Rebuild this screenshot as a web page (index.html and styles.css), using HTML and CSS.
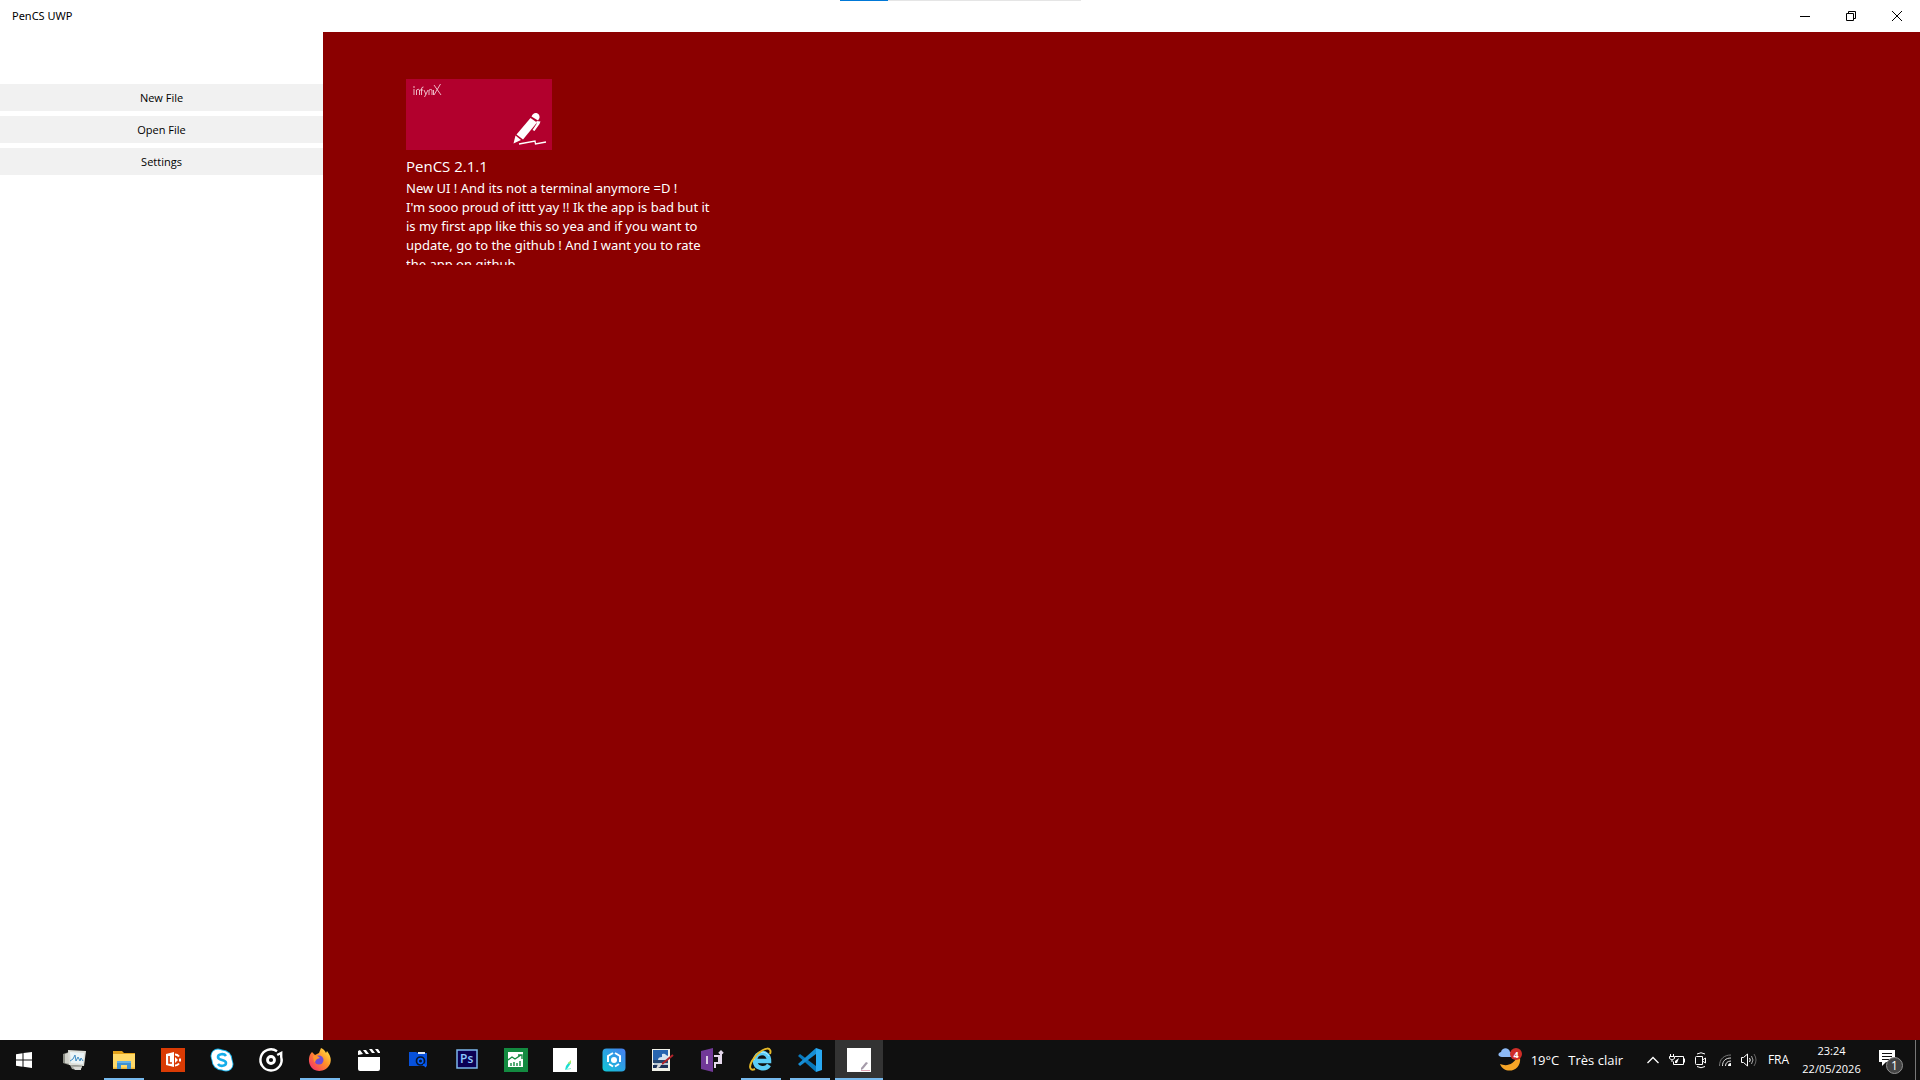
FILE: index.html
```html
<!DOCTYPE html>
<html lang="en">
<head>
<meta charset="utf-8">
<title>PenCS UWP</title>
<link rel="stylesheet" href="styles.css">
</head>
<body>
<div class="load-track"><div class="load-value"></div></div>
<header class="titlebar">
  <h1 class="app-name">PenCS UWP</h1>
  <div class="window-controls">
    <button class="caption" aria-label="Minimize"><svg width="10" height="10" viewBox="0 0 10 10"><path d="M0 5.500h10" stroke="#000" fill="none"/></svg></button>
    <button class="caption" aria-label="Restore"><svg width="10" height="10" viewBox="0 0 10 10"><path d="M.5 2.500h7v7h-7zM2.500 2.500v-2h7v7h-2" stroke="#000" fill="none"/></svg></button>
    <button class="caption" aria-label="Close"><svg width="10" height="10" viewBox="0 0 10 10"><path d="M0 0l10 10M10 0L0 10" stroke="#000" fill="none"/></svg></button>
  </div>
</header>
<div class="workspace">
  <nav class="sidebar">
    <button class="side-button">New File</button>
    <button class="side-button">Open File</button>
    <button class="side-button">Settings</button>
  </nav>
  <main class="content">
    <article class="news">
      <svg class="banner" width="146" height="71" viewBox="0 0 146 71" role="img" aria-label="infyniX">
        <rect width="146" height="71" fill="#b2002d"/>
        <g fill="none" stroke="#f3cbd5" stroke-width=".9">
          <path d="M8 10v6M7 8h2M10.500 16v-5q2-1.500 3 0v5M15.500 16V10q0-2 2-2M14 11h3M18 11l2 4.500M22 11l-3.500 7M23 16v-5q2-1 3 0v5M27.500 11v5M28 6l7 10M34.500 5L28 16"/>
        </g>
        <g fill="#fff">
          <path d="M125.500 37.500q1.500-4 5-3.500 3.500 1 3 5l-1.500 2.500z"/>
          <path d="M124.500 39l6.500 4.500-14 17-6.500-5z"/>
          <path d="M109.500 56.500l5.500 4.500-7.500 3.500z"/>
          <path d="M130.500 42l4 .5-1 2.500-5 7-2-1 4-6z"/>
        </g>
        <path d="M113 65l16-3 .5 3 10.500-2" fill="none" stroke="#fff" stroke-width="1.300"/>
      </svg>
      <h2 class="news-title">PenCS 2.1.1</h2>
      <p class="news-text">New UI ! And its not a terminal anymore =D !<br>I'm sooo proud of ittt yay !! Ik the app is bad but it<br>is my first app like this so yea and if you want to<br>update, go to the github ! And I want you to rate<br>the app on github</p>
    </article>
  </main>
</div>
<footer class="taskbar">
  <button class="task start" aria-label="Start"><svg width="24" height="24" viewBox="0 0 24 24"><path fill="#fff" d="M4 6.300l6.500-1v6.200H4zM11.500 5.100L20 4v7.500h-8.500zM4 12.500h6.500v6.200L4 17.800zM11.500 12.500H20V20l-8.500-1.200z"/></svg></button>
  <div class="apps">
  <button class="task" aria-label="Performance Monitor"><svg width="24" height="24" viewBox="0 0 24 24"><path fill="#8b8d84" d="M0 6l6-2v13l-6-2z"/><path fill="#cfd0c9" d="M2 6l5-2v12l-5-1z"/><path fill="#a9aba4" d="M7 17l12 1v2l-4 2-6-1z"/><path fill="#d9dad6" d="M10 19l8 0 0 3-6 0z"/><path fill="#dcded8" d="M5 2l18 1-2 15-15-1z"/><path fill="#eaf4f7" d="M7 4l14 1-1 11-12-1z"/><path fill="none" stroke="#3f8cc3" d="M7 13l3-2 2-4 1 6 2-4 2 4 1-3 2 3"/></svg></button>
  <button class="task running" aria-label="File Explorer"><svg width="24" height="24" viewBox="0 0 24 24"><path fill="#e3a21a" d="M1 3h9l2 2h11v16H1z"/><path fill="#ffd968" d="M1 6h22v14H1z"/><path fill="#f8c94f" d="M1 19h22v1.500H1z"/><path fill="#3f91d1" d="M5 13h14v8h-4v-4h-6v4H5z"/><path fill="#66b2e7" d="M5 13h14v2H5z"/></svg></button>
  <button class="task" aria-label="Office tools"><svg width="24" height="24" viewBox="0 0 24 24"><path fill="#da3b04" d="M0 0h24v24H0z"/><path fill="#fff" d="M5 6l8-2v15l-8-2z"/><path fill="none" stroke="#d53400" stroke-width="1.600" d="M8 8v7h3"/><path fill="none" stroke="#fff" stroke-width="2" d="M14 6.500q2.500 0 4 2M19 10.500v3M18 15.500q-1.500 2-4 2"/><path fill="#fff" d="M14 9l3 3-3 3z"/></svg></button>
  <button class="task" aria-label="Skype"><svg width="24" height="24" viewBox="0 0 24 24"><g fill="#14aee6"><circle cx="8" cy="8" r="7.500"/><circle cx="16" cy="16" r="7.500"/><circle cx="12" cy="12" r="10.500"/></g><g fill="#fff"><circle cx="8" cy="8" r="6.600"/><circle cx="16" cy="16" r="6.600"/><circle cx="12" cy="12" r="9.600"/></g><path fill="none" stroke="#16aeea" stroke-width="2.600" d="M16 8c-2-3-8-2-8 1 0 4 8 2 8 6 0 3-6 4-8 1"/></svg></button>
  <button class="task" aria-label="Groove Music"><svg width="24" height="24" viewBox="0 0 24 24" fill="none" stroke="#fff"><path stroke-width="2.400" d="M18 3.200A10.600 10.600 0 1 0 22.200 9V5l-4 2"/><circle cx="12" cy="12" r="3.500" stroke-width="2.800"/></svg></button>
  <button class="task running" aria-label="Firefox"><svg width="24" height="24" viewBox="0 0 24 24"><defs><linearGradient id="fox" x1="1" y1="0" x2="0" y2="1"><stop offset="0" stop-color="#fff34b"/><stop offset=".45" stop-color="#ff9128"/><stop offset="1" stop-color="#f52173"/></linearGradient></defs><path fill="url(#fox)" d="M4 4l3 3 4-2 2-5c3 1 4 3 5 5l1-2c3 4 5 8 3 13-4 9-17 9-20 1-2-5-1-10 2-13z"/><circle cx="11" cy="12" r="4.500" fill="#704bd4"/><path fill="#ff942d" d="M5 8c3-1 5 0 7 2l-3 1c-2 2-1 3-3 3z"/></svg></button>
  <button class="task" aria-label="Movies"><svg width="24" height="24" viewBox="0 0 24 24" fill="#fff"><path d="M1 9h22v12q0 2-2 2H3q-2 0-2-2zM1 3l2-1 3 4-5 1zM6 2h3l3 4H9zM12 1h3l3 4h-3zM18 1h3l2 3v1h-2z"/></svg></button>
  <button class="task" aria-label="Folder search"><svg width="24" height="24" viewBox="0 0 24 24"><path fill="#0751db" d="M3 4h7l2 1h9v13H3z"/><path fill="#e0e8f3" d="M12 4h7v2h-7z"/><circle cx="14.500" cy="13" r="4" fill="#0861ff" stroke="#06162d" stroke-width="1.700"/><circle cx="14.500" cy="13" r="1.500" fill="#06162d"/><path d="M17.500 16l2.500 3" stroke="#0861ff" stroke-width="1.500"/></svg></button>
  <button class="task" aria-label="Photoshop"><svg width="24" height="24" viewBox="0 0 24 24"><path fill="#0b0054" stroke="#7cb7eb" stroke-width="1.500" d="M2 2h20v18H2z"/><text class="ps-letters" x="5" y="15">Ps</text></svg></button>
  <button class="task" aria-label="Market charts"><svg width="24" height="24" viewBox="0 0 24 24"><path fill="#138a40" d="M0 0h24v24H0z"/><path fill="#fff" d="M4 4h15v15H4z"/><path fill="none" stroke="#138a40" stroke-width="1.400" d="M4 12l4-3 3 2 6-4M14 7h4v4M7 18v-3M10 18v-4M13 18v-3M16 18v-5"/></svg></button>
  <button class="task" aria-label="Color pen"><svg width="24" height="24" viewBox="0 0 24 24"><path fill="#fff" d="M0 0h24v24H0z"/><path fill="#19ddd2" d="M13 18l3-4 2 1-4 6-2 1z"/><path fill="#a8e965" d="M15 15l3-3v3l-2 1z"/><path stroke="#82efd9" d="M13 21.500l5-1"/></svg></button>
  <button class="task" aria-label="Hex cloud"><svg width="24" height="24" viewBox="0 0 24 24"><defs><linearGradient id="hex" x1="0" y1="1" x2="1" y2="0"><stop stop-color="#10c7d5"/><stop offset="1" stop-color="#477df0"/></linearGradient></defs><rect width="23" height="23" x=".5" y=".5" rx="4" fill="url(#hex)"/><path fill="none" stroke="#fff" stroke-width="2" d="M11 5L6 8v6M13 5l5 3v6M7 16l4 2.500M17 16l-4 2.500"/><circle cx="12" cy="12" r="3" fill="#fff"/></svg></button>
  <button class="task" aria-label="Image editor"><svg width="24" height="24" viewBox="0 0 24 24"><path fill="#f1f1e8" d="M1 1h18v22H1z"/><path fill="#2865b0" d="M2 2h15v10H2z"/><path fill="#d6e4ef" d="M11 6q3-1 4 1l2 1v4H7q0-3 4-3z"/><path fill="#26466f" d="M2 12h15v3H2z"/><path fill="#b7c6d2" d="M3 15h14v2H3z"/><path fill="#1c3157" d="M2 17h15v3H2z"/><path stroke="#b2242a" stroke-width="2" d="M22 7L11 16"/><path fill="#d8d8d8" d="M11 15l-2 4-4 2 2-5z"/></svg></button>
  <button class="task" aria-label="Design tool"><svg width="24" height="24" viewBox="0 0 24 24"><path fill="#713998" d="M1 3l12-3v24L1 21z"/><path fill="none" stroke="#fff" stroke-width="1.500" d="M7 8v8"/><path fill="none" stroke="#e5d8ec" stroke-width="2" d="M14 8h5v7h-4v5M18 15h3V4M19 5.500l2-2 2 2"/></svg></button>
  <button class="task running" aria-label="Internet Explorer"><svg width="24" height="24" viewBox="0 0 24 24"><path fill="none" stroke="#5bcdf7" stroke-width="4.500" d="M20 17c-4 6-14 3-14-4C6 3 20 2 20 13H7"/><path fill="none" stroke="#b5eefe" d="M5 12C6 3 17 2 20 8"/><path fill="none" stroke="#e6b827" stroke-width="2" d="M6 21c-4 2-7-1-3-8C9 3 19-2 21 2q1 1 0 4"/></svg></button>
  <button class="task running" aria-label="Visual Studio Code"><svg width="24" height="24" viewBox="0 0 24 24"><path fill="#0879bd" d="M0 8l2-2 16 12v6z"/><path fill="#168ed5" d="M0 16l2 2L18 6V0z"/><path fill="#29a9f2" d="M18 0l6 2v20l-6 2z"/></svg></button>
  <button class="task running active" aria-label="PenCS UWP"><svg width="24" height="24" viewBox="0 0 24 24"><path fill="#fff" d="M0 0h24v24H0z"/><path fill="#a59baa" d="M14 20l5-6 2 1-5 6-2 1z"/><path stroke="#dfa3b4" d="M14 22.500h9"/></svg></button>
  </div>
  <div class="tray">
    <button class="weather"><svg width="24" height="24" viewBox="0 0 24 24"><path fill="#f6a526" d="M22 9c2 15-16 18-20 7 7 3 14 0 17-7z"/><path fill="#8db9f4" d="M4 9C0 9-1 5 3 4c1-5 8-5 9 0 4 0 4 5 1 5z"/><circle cx="18" cy="6" r="6" fill="#cf2d27"/><text class="badge-number" x="18" y="10">4</text></svg><span>19°C</span><span>Très clair</span></button>
    <button class="tray-icon" aria-label="Show hidden icons"><svg width="12" height="12" viewBox="0 0 12 12"><path d="M.5 9L6 3.500 11.500 9" fill="none" stroke="#fff" stroke-width="1.300"/></svg></button>
    <button class="tray-icon" aria-label="Battery"><svg width="16" height="16" viewBox="0 0 16 16"><path fill="none" stroke="#fff" d="M6 4.500h8.500v8H4.500v-3M15.500 6.500v4M1.500 2v2M4.500 2v2M.5 4.500h5v2q-2.500 3-5 0zM3 8v2"/><path fill="#fff" d="M10 6l-2 5H6V9z"/></svg></button>
    <button class="tray-icon" aria-label="Meet Now"><svg width="12" height="16" viewBox="0 0 12 16"><path fill="none" stroke="#fff" d="M.5 5.500q0-1 1-1h6v8h-6q-1 0-1-1zM7.500 8l3-2v5l-3-2M2 2q4-2.500 8 0M2 14.500q4 2.500 8 0"/></svg></button>
    <button class="tray-icon" aria-label="Network"><svg width="14" height="16" viewBox="0 0 14 16" fill="none"><path stroke="#777" d="M1.500 14C1.500 7 6 3 13 3"/><path stroke="#ddd" d="M4.500 14C4.500 9 7.500 6 13 6M7.500 14c0-3 2-5 5.500-5"/><path fill="#fff" d="M10 14q0-3 3-3v3z"/></svg></button>
    <button class="tray-icon" aria-label="Volume"><svg width="16" height="16" viewBox="0 0 16 16" fill="none"><path stroke="#fff" d="M.5 5.500h2l4-3.500v12l-4-3.500h-2zM8.500 6q1.500 2 0 4"/><path stroke="#aaa" d="M10.500 4q3 4 0 8"/><path stroke="#666" d="M13 2q4 6 0 12"/></svg></button>
    <button class="language">FRA</button>
    <button class="clock"><span>23:24</span><span>22/05/2026</span></button>
    <button class="notifications" aria-label="1 notification"><svg width="26" height="26" viewBox="0 0 26 26"><path fill="#fff" d="M1 1h16v12H8l-4 4v-4H1z"/><path stroke="#111" d="M4 4.500h10M4 7.500h10M4 10.500h7"/><circle cx="16.500" cy="16.500" r="8" fill="#444" stroke="#929292"/><text class="count-number" x="16.500" y="21">1</text></svg></button>
    <button class="show-desktop" aria-label="Show desktop"></button>
  </div>
</footer>
</body>
</html>
```
FILE: styles.css
```css
* { box-sizing: border-box; }

body {
  margin: 0;
  min-height: 100vh;
  display: flex;
  flex-direction: column;
  background: #fff;
  color: #000;
  font: 11px/16px "Segoe UI", "Open Sans", sans-serif;
}

button {
  margin: 0;
  padding: 0;
  border: 0;
  background: none;
  color: inherit;
  font: inherit;
}

h1, h2, p { margin: 0; font-weight: 400; }
svg { display: block; flex: none; overflow: visible; }

.load-track {
  position: absolute;
  top: 0;
  left: 50%;
  width: 241px;
  height: 1px;
  margin-left: -120px;
  background: #e5e5e5;
}
.load-value { width: 20%; height: 1px; background: #0078d7; }

.titlebar {
  height: 32px;
  padding-left: 12px;
  display: flex;
  align-items: center;
  justify-content: space-between;
}
.app-name { font-family: "Segoe UI", "Noto Sans", sans-serif; font-size: 11px; }
.window-controls { display: flex; }
.caption {
  width: 46px;
  height: 32px;
  display: flex;
  align-items: center;
  justify-content: center;
}

.workspace { flex: 1; display: flex; }
.sidebar {
  width: 323px;
  padding-top: 52px;
  display: flex;
  flex-direction: column;
  gap: 5px;
}
.side-button { height: 27px; background: #f1f1f1; }

.content {
  flex: 1;
  padding: 47px 83px;
  background: #8b0000;
  color: #fff;
}
.news { max-width: 320px; }
.news-title { margin-top: 6px; font-size: 15px; line-height: 20px; }
.news-text {
  margin-top: 3px;
  height: 86px;
  overflow: hidden;
  font-family: "Segoe UI", "Noto Sans", sans-serif;
  font-size: 13px;
  line-height: 19px;
  white-space: nowrap;
}

.taskbar {
  height: 40px;
  display: flex;
  background: #101010;
  color: #fff;
}
.apps { display: flex; gap: 1px; margin-left: 3px; }
.task {
  width: 48px;
  height: 40px;
  display: flex;
  align-items: center;
  justify-content: center;
}
.running {
  background: linear-gradient(#76b9ed, #76b9ed) center bottom / 40px 2px no-repeat;
}
.active { background-color: #333; background-size: 48px 2px; }
.ps-letters { fill: #8ecbff; font-size: 12px; font-weight: 600; }
.badge-number { fill: #fff; font-size: 9px; font-weight: 700; text-anchor: middle; }
.count-number { fill: #fff; font-size: 12px; text-anchor: middle; }

.tray { display: flex; margin-left: auto; }
.weather {
  display: flex;
  align-items: center;
  gap: 9px;
  margin-right: 18px;
  font-size: 13px;
}
.tray-icon {
  width: 24px;
  display: flex;
  align-items: center;
  justify-content: center;
}
.language { width: 35px; font-size: 12px; }
.clock {
  width: 71px;
  display: flex;
  flex-direction: column;
  align-items: center;
  justify-content: center;
  gap: 2px;
}
.notifications {
  width: 48px;
  padding-top: 4px;
  display: flex;
  align-items: center;
  justify-content: center;
}
.show-desktop { width: 5px; border-left: 1px solid #777; }
```
